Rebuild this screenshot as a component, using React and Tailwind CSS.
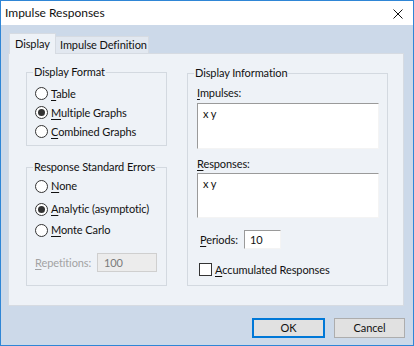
import React from "react"

const font = { fontFamily: "Lato, 'Noto Sans', sans-serif" }

const U = ({ children }) => <span className="underline underline-offset-[2px] decoration-[1px]">{children}</span>

const Radio = ({ checked, children, className = "" }) => (
  <div className={`flex items-center h-[18px] ${className}`}>
    <div className="w-[13px] h-[13px] rounded-full border border-[#333] bg-white flex items-center justify-center shrink-0">
      {checked && <div className="w-[7px] h-[7px] rounded-full bg-[#333]" />}
    </div>
    <span className="ml-[3px] leading-[14px] whitespace-nowrap">{children}</span>
  </div>
)

// etched frame with the caption sitting on the top line
const GroupBox = ({ title, className = "", bodyClass = "", children }) => (
  <div className={`border border-[#d3d9e0] ${className}`}>
    <div className="-mt-[8px] ml-[6px] px-[1px] w-fit bg-[#eef2f7] leading-[14px] whitespace-nowrap">{title}</div>
    <div className={bodyClass}>{children}</div>
  </div>
)

const sunken = "bg-white border-t border-l border-t-[#9a9a9a] border-l-[#9a9a9a] border-r border-b border-r-[#f4f4f4] border-b-[#f4f4f4]"

export default function App() {
  return (
    <div
      className="w-[414px] h-[346px] flex flex-col border border-[#2f86d6] bg-[#ccd9e9] text-[11px] tracking-[-0.1px] text-[#111] overflow-hidden"
      style={font}
    >
      {/* Title bar */}
      <div className="h-[24px] bg-white flex items-center justify-between pl-[4px] pr-[10px] shrink-0">
        <span className="text-[12px] tracking-normal leading-[14px] whitespace-nowrap">Impulse Responses</span>
        <svg width="10" height="10" viewBox="0 0 10 10" className="mt-[1px]">
          <path d="M0.5 0.5 L9.5 9.5 M9.5 0.5 L0.5 9.5" stroke="#111" strokeWidth="1" fill="none" />
        </svg>
      </div>

      {/* Tabs */}
      <div className="flex items-end h-[20px] mt-[8px] ml-[8px]">
        <div className="relative z-10 -mb-px h-[21px] w-[47px] bg-[#eef2f7] border border-b-0 border-[#d6dbe2] flex items-start pt-[3px] pl-[5px] leading-[14px] whitespace-nowrap">
          Display
        </div>
        <div className="h-[17px] w-[93px] bg-[#e2e8f0] border border-b-0 border-l-0 border-[#d6dbe2] flex items-start pt-[1px] pl-[4px] leading-[14px] whitespace-nowrap">
          Impulse Definition
        </div>
      </div>

      {/* Panel */}
      <div className="ml-[7px] w-[396px] h-[253px] bg-[#eef2f7] border border-[#d6dbe2] flex items-start pt-[18px] pl-[17px]">
        <div className="flex flex-col w-[141px]">
          <GroupBox title="Display Format" className="h-[74px]" bodyClass="pl-[8px] mt-[5px] flex flex-col">
            <Radio className="h-[19px]"><U>T</U>able</Radio>
            <Radio className="h-[19px]" checked><U>M</U>ultiple Graphs</Radio>
            <Radio className="h-[19px]"><U>C</U>ombined Graphs</Radio>
          </GroupBox>

          <GroupBox title="Response Standard Errors" className="mt-[21px] h-[119px]" bodyClass="pl-[8px]">
            <div className="flex flex-col mt-[3px]">
              <Radio><U>N</U>one</Radio>
              <Radio checked className="mt-[5px]"><U>A</U>nalytic (asymptotic)</Radio>
              <Radio className="mt-[3px]"><U>M</U>onte Carlo</Radio>
            </div>
            <div className="flex items-center mt-[14px] h-[19px]">
              <span className="text-[#a3a3a3] leading-[14px] w-[62px] whitespace-nowrap"><U>R</U>epetitions:</span>
              <div className="w-[60px] h-[19px] bg-[#ececec] border border-[#cfcfcf] flex items-center pl-[6px] text-[#7a7a7a] leading-[14px]">
                100
              </div>
            </div>
          </GroupBox>
        </div>

        <GroupBox title="Display Information" className="ml-[20px] mt-[1px] w-[201px] h-[213px]" bodyClass="pl-[9px]">
          <div className="leading-[14px] mt-[6px] whitespace-nowrap"><U>I</U>mpulses:</div>
          <div className={`mt-[3px] w-[182px] h-[46px] ${sunken} pl-[5px] pt-[3px] leading-[14px]`}>
            x y
          </div>
          <div className="leading-[14px] mt-[8px] whitespace-nowrap"><U>R</U>esponses:</div>
          <div className={`mt-[2px] w-[182px] h-[45px] ${sunken} pl-[5px] pt-[3px] leading-[14px]`}>
            x y
          </div>
          <div className="flex items-center mt-[12px] h-[19px] pl-[3px]">
            <span className="leading-[14px] w-[44px] whitespace-nowrap"><U>P</U>eriods:</span>
            <div className={`w-[37px] h-[19px] ${sunken} flex items-center pl-[5px] leading-[14px]`}>
              10
            </div>
          </div>
          <div className="flex items-center mt-[12px] h-[17px] pl-[2px]">
            <div className="w-[13px] h-[13px] border border-[#333] bg-white shrink-0" />
            <span className="ml-[3px] leading-[14px] whitespace-nowrap"><U>A</U>ccumulated Responses</span>
          </div>
        </GroupBox>
      </div>

      {/* Buttons */}
      <div className="flex justify-end gap-[9px] mt-[12px] mr-[8px]">
        <button className="w-[73px] h-[20px] bg-[#e1e1e1] border-2 border-[#0078d7] flex items-center justify-center leading-[14px]">
          OK
        </button>
        <button className="w-[71px] h-[20px] bg-[#e1e1e1] border border-[#adadad] flex items-center justify-center leading-[14px]">
          Cancel
        </button>
      </div>
    </div>
  )
}
